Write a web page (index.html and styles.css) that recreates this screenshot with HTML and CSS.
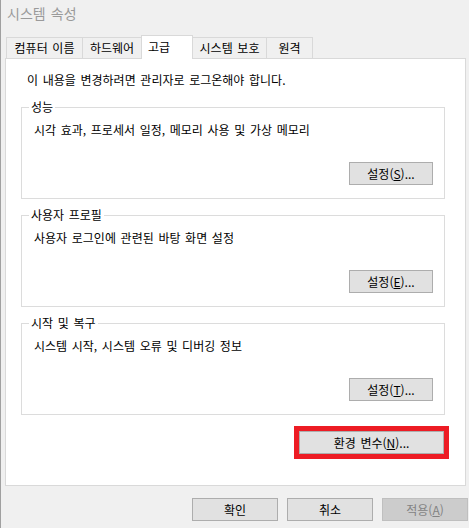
FILE: index.html
```html
<!DOCTYPE html>
<html lang="ko">
<head>
<meta charset="utf-8">
<title>시스템 속성</title>
<link rel="stylesheet" href="styles.css">
</head>
<body>
<div class="window">
  <div class="titlebar">시스템 속성</div>
  <div class="tabs">
    <div class="tab t1">컴퓨터 이름</div>
    <div class="tab t2">하드웨어</div>
    <div class="tab t3 active">고급</div>
    <div class="tab t4">시스템 보호</div>
    <div class="tab t5">원격</div>
  </div>
  <div class="panel">
    <p class="notice">이 내용을 변경하려면 관리자로 로그온해야 합니다.</p>
    <fieldset class="group">
      <legend>성능</legend>
      <p class="desc">시각 효과, 프로세서 일정, 메모리 사용 및 가상 메모리</p>
      <div class="group-actions"><button class="btn">설정(<u>S</u>)...</button></div>
    </fieldset>
    <fieldset class="group">
      <legend>사용자 프로필</legend>
      <p class="desc">사용자 로그인에 관련된 바탕 화면 설정</p>
      <div class="group-actions"><button class="btn">설정(<u>E</u>)...</button></div>
    </fieldset>
    <fieldset class="group">
      <legend>시작 및 복구</legend>
      <p class="desc">시스템 시작, 시스템 오류 및 디버깅 정보</p>
      <div class="group-actions"><button class="btn">설정(<u>T</u>)...</button></div>
    </fieldset>
    <div class="env-row"><button class="btn env">환경 변수(<u>N</u>)...</button></div>
  </div>
  <div class="footer">
    <button class="btn dlg">확인</button>
    <button class="btn dlg">취소</button>
    <button class="btn dlg disabled">적용(<u>A</u>)</button>
  </div>
</div>
</body>
</html>
```
FILE: styles.css
```css
* { box-sizing: border-box; }
html, body { margin: 0; padding: 0; background: #f0f0f0; }
body {
  font-family: "Noto Sans CJK KR", "Noto Sans", sans-serif;
  font-size: 12px;
  word-spacing: 1.3px;
  color: #000;
}
.window {
  width: 469px;
  height: 528px;
  border-left: 1px solid #a0a0a0;
  background: #f0f0f0;
  overflow: hidden;
}
.titlebar {
  height: 27px;
  line-height: 27px;
  padding-left: 6px;
  font-size: 14px;
  color: #9a9a9a;
}
.tabs {
  display: flex;
  align-items: flex-end;
  height: 31px;
  margin-left: 5px;
}
.tab {
  height: 21px;
  line-height: 20px;
  border: 1px solid #d9d9d9;
  border-bottom: none;
  background: #f0f0f0;
  text-align: center;
  margin-left: -1px;
}
.tab:first-child { margin-left: 0; }
.t1 { width: 77px; }
.t2 { width: 60px; }
.t3 { width: 52px; }
.t4 { width: 75px; }
.t5 { width: 47px; }
.tab.active {
  height: 24px;
  line-height: 22px;
  background: #fff;
  margin-bottom: -1px;
  position: relative;
  z-index: 1;
  text-align: left;
  padding-left: 6px;
}
.panel {
  margin-left: 4px;
  width: 461px;
  height: 428px;
  border: 1px solid #d9d9d9;
  background: #fff;
  padding: 13px 20px 0 15px;
}
.notice {
  margin: 0 0 11px 6px;
  line-height: 16px;
}
.group {
  margin: 0 0 8px 0;
  padding: 0 11px 13px 12px;
  border: 1px solid #dcdcdc;
  min-width: 0;
}
.group legend {
  padding: 0 2px;
  margin-left: -5px;
  line-height: 16px;
}
.desc {
  margin: 7px 0 0 0;
  line-height: 16px;
}
.group-actions {
  display: flex;
  justify-content: flex-end;
  margin-top: 24px;
}
.btn {
  font-family: inherit;
  font-size: 12px;
  word-spacing: 1.3px;
  color: #000;
  background: #e1e1e1;
  border: 1px solid #adadad;
  height: 23px;
  width: 84px;
  padding: 0;
  line-height: 20px;
  border-radius: 0;
}
.btn u { text-underline-offset: 1px; }
.env-row {
  display: flex;
  justify-content: flex-end;
  margin-top: 16px;
  padding-right: 1px;
}
.btn.env {
  width: 145px;
  box-shadow: 0 0 0 5px #ed1c24;
}
.footer {
  display: flex;
  justify-content: flex-end;
  gap: 9px;
  margin-top: 12px;
  padding-right: 1px;
}
.btn.dlg { width: 86px; }
.btn.disabled {
  background: #cccccc;
  border-color: #bfbfbf;
  color: #838383;
}
```
